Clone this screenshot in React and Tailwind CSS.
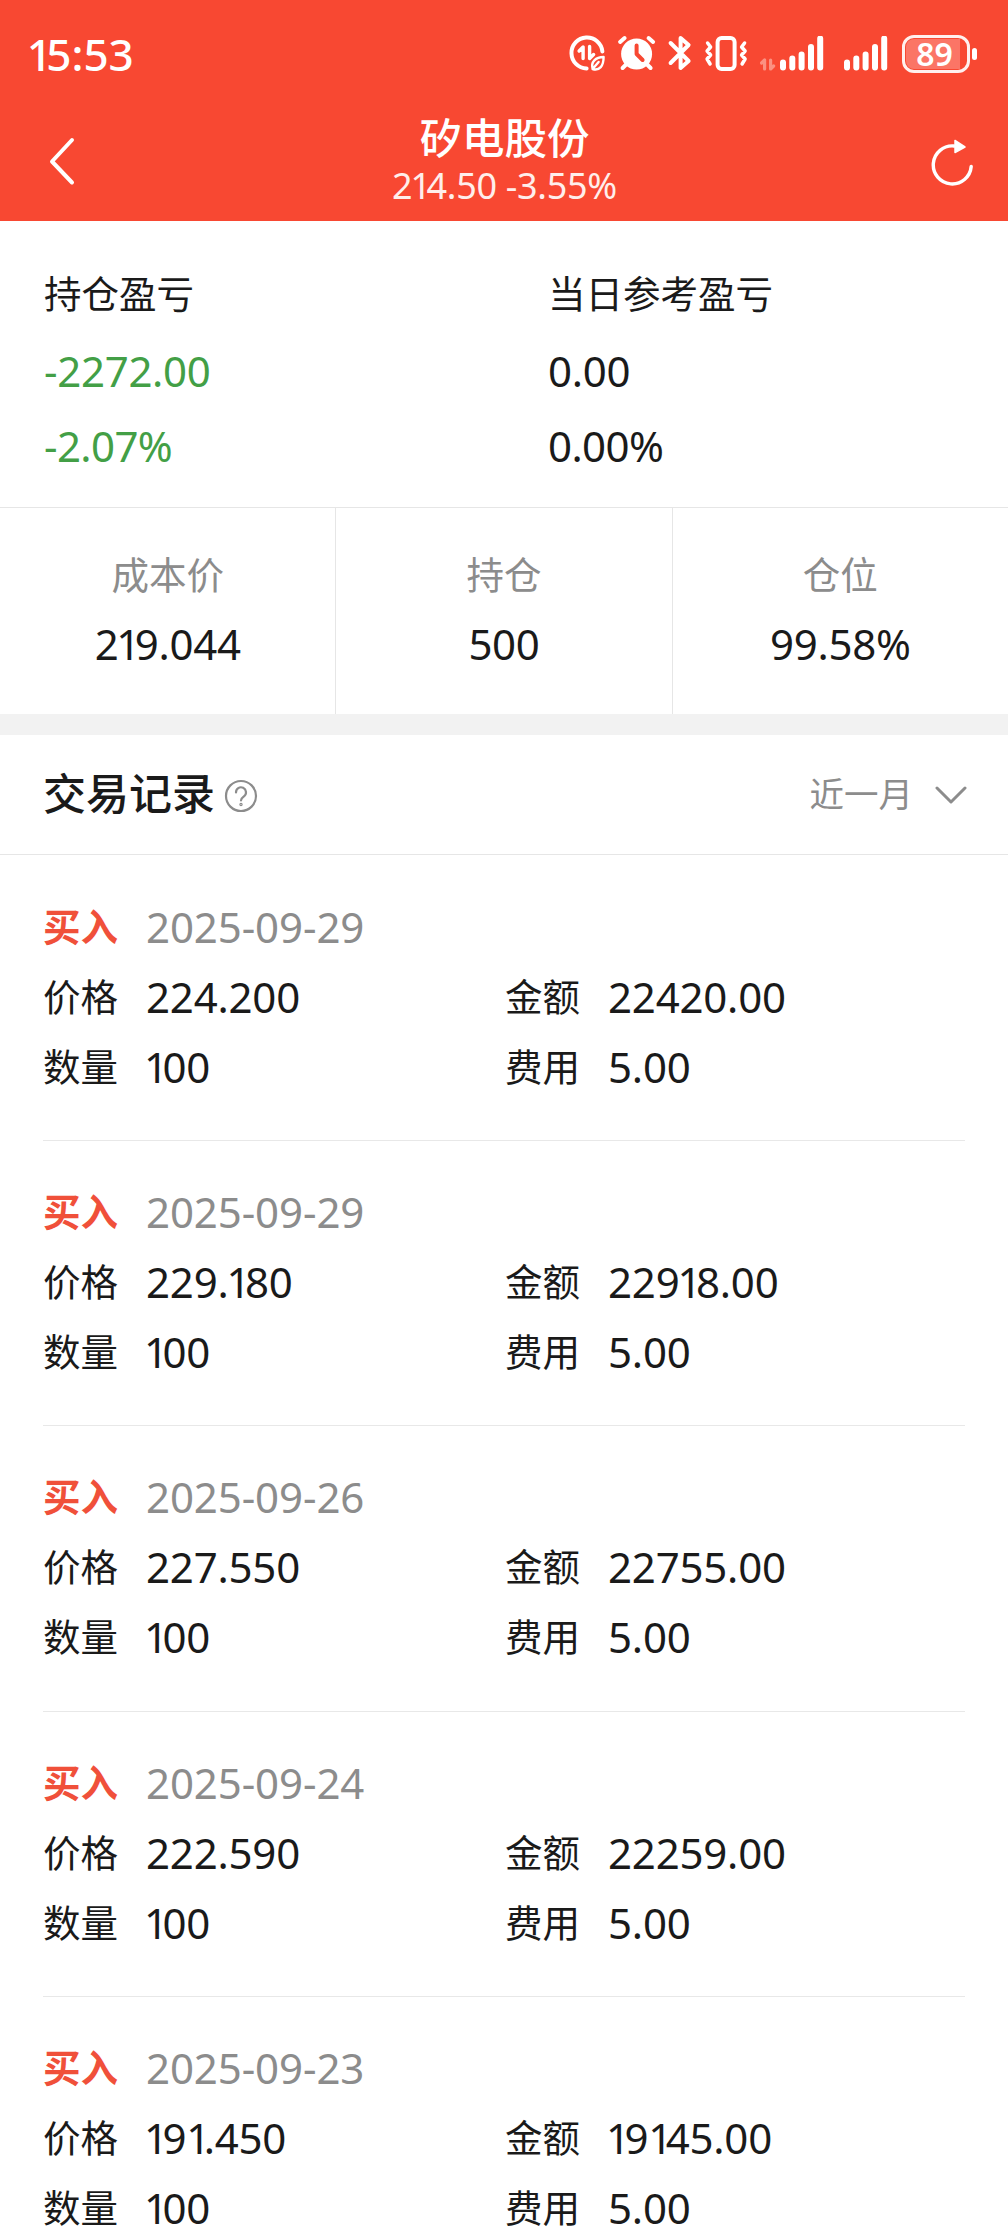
const records = [
	{ date: "2025-09-29", price: "224.200", amount: "22420.00", quantity: "100", fee: "5.00" },
	{ date: "2025-09-29", price: "229.180", amount: "22918.00", quantity: "100", fee: "5.00" },
	{ date: "2025-09-26", price: "227.550", amount: "22755.00", quantity: "100", fee: "5.00" },
	{ date: "2025-09-24", price: "222.590", amount: "22259.00", quantity: "100", fee: "5.00" },
	{ date: "2025-09-23", price: "191.450", amount: "19145.00", quantity: "100", fee: "5.00" },
];

// Figures with a narrow "1", the rest keep the font's advance
const Figures = ({ value }) =>
	value.split(/(1)/).filter(Boolean).map((part, i) =>
		part === "1" ? <span key={i} className="tracking-[-0.16em] first:-ml-[0.05em] first:tracking-[-0.13em]">1</span> : part
	);

const SignalBars = () => (
	<svg className="h-[36px] w-[46px]" viewBox="0 0 46 36" stroke="#fff" strokeWidth="6" strokeLinecap="round">
		<path d="M4 26.500v5M13.300 22.500v9M22.600 18.500v13M32 11v20.500M41.200 2.500v29" />
	</svg>
);

const StatusBar = () => (
	<div className="flex h-[106px] items-start justify-between pl-[29px] pr-[31px] pt-[28px] text-white">
		<span className="text-[44px] font-medium leading-[52px]"><Figures value="15:53" /></span>
		<div className="flex h-[52px] items-center">
			<svg className="h-[52px] w-[212px]" viewBox="-1.6 0 212 52" fill="none" stroke="#fff" strokeLinecap="round" strokeLinejoin="round">
				<path d="M33.8 23.5A15.5 15.5 0 1 0 18 40.5" strokeWidth="4" />
				<path d="M10.500 23l4-4v11.500M21 18.500v12l4-4" strokeWidth="3.4" />
				<path d="M24 41c-2-7 3-12 11-12 0 9-4 14-11 12zM24 41l6-7" strokeWidth="2.4" />
				<circle cx="68" cy="26" r="15.500" fill="#fff" stroke="none" />
				<path d="M51.500 14l4.500-4M84.500 14l-4.500-4M58 36l-4 4M78 36l4 4" strokeWidth="4" />
				<path d="M68 17.500v8.500l6 6" stroke="#f84832" strokeWidth="4" />
				<path d="M102 15l18 18-8 7V10l8 7-18 18" strokeWidth="4" />
				<rect x="149" y="10" width="17" height="31" rx="4" strokeWidth="4" />
				<path d="M139 15l3 4-3.500 4 3.500 4-3.500 4 3 5M176 15l-3 4 3.500 4-3.500 4 3.500 4-3 5" strokeWidth="3.500" />
				<path d="M193 35l3-3v9M202 32v9l3-3" stroke="#fb9182" strokeWidth="3.200" />
			</svg>
			<SignalBars />
			<div className="w-[18px]" />
			<SignalBars />
			<div className="ml-[13px] flex items-center gap-[2px]">
				<div className="flex h-[38px] w-[68px] rounded-[12px] border-[3px] border-[#fff0ee] p-[1px]">
					<div className="flex h-full w-[54px] items-center justify-center rounded-l-[8px] bg-[#fb7566] pl-[3px] text-[32px] font-semibold leading-none">89</div>
				</div>
				<div className="h-[12px] w-[5px] rounded-full bg-white" />
			</div>
		</div>
	</div>
);

const Header = () => (
	<header className="h-[221px] bg-[#f84832]">
		<StatusBar />
		<div className="flex h-[115px] items-start justify-between px-[46px] text-white">
			<svg className="mt-[30px] h-[50px] w-[32px]" viewBox="0 0 32 50" fill="none" stroke="#fff" strokeWidth="4" strokeLinecap="round" strokeLinejoin="round">
				<path d="M26 4L6 25.500l20 21" />
			</svg>
			<div className="flex flex-col items-center pt-[7px]">
				<h1 className="text-[42.500px] font-medium leading-[50px]">矽电股份</h1>
				<p className="text-[36px] leading-[46px] tracking-[-0.3px] text-[#ffeeeb]"><Figures value="214.50 -3.55%" /></p>
			</div>
			<svg className="-mr-[13px] mt-[32px] h-[48px] w-[44px]" viewBox="0 0 44 48" fill="none">
				<path d="M40.200 28.500A19 19 0 1 1 23 8" stroke="#fff" strokeWidth="3.400" strokeLinecap="round" />
				<path d="M24 2.500v12l10-5.500z" fill="#fff" stroke="#fff" strokeWidth="1.500" strokeLinejoin="round" />
			</svg>
		</div>
	</header>
);

const ProfitColumn = ({ label, amount, rate, tone }) => (
	<div className="w-1/2 pl-[44px] pt-[43px]">
		<p className="text-[37.500px] leading-[60px]">{label}</p>
		<p className={`mt-[17px] text-[42px] leading-[60px] tracking-[-0.3px] ${tone}`}>{amount}</p>
		<p className={`mt-[15px] text-[42px] leading-[60px] tracking-[-0.6px] ${tone}`}>{rate}</p>
	</div>
);

const Stat = ({ label, value }) => (
	<div className="flex flex-1 flex-col items-center border-r border-[#e6e6e6] pt-[37px] last:border-r-0">
		<span className="text-[37.500px] leading-[60px] text-[#8c8c8c]">{label}</span>
		<span className="mt-[9px] text-[42px] leading-[60px] tracking-[-0.3px]"><Figures value={value} /></span>
	</div>
);

const Field = ({ label, value }) => (
	<div className="flex h-[70px] items-center leading-[42px]">
		<span className="w-[103px] text-[37.500px]">{label}</span>
		<span className="text-[42px] tracking-[-0.2px]"><Figures value={value} /></span>
	</div>
);

const RecordItem = ({ record }) => (
	<li className="mx-[43px] h-[285.400px] border-b border-[#e8e8e8] pt-[36px]">
		<div className="flex h-[70px] items-center leading-[42px]">
			<span className="w-[103px] text-[37.500px] font-bold text-[#f0503a]">买入</span>
			<span className="text-[42px] tracking-[-0.1px] text-[#8c8c8c]">{record.date}</span>
		</div>
		<div className="grid grid-cols-[462px_460px]">
			<Field label="价格" value={record.price} />
			<Field label="金额" value={record.amount} />
			<Field label="数量" value={record.quantity} />
			<Field label="费用" value={record.fee} />
		</div>
	</li>
);

const App = () => (
	<div className="h-[2232px] w-[1008px] overflow-hidden bg-white font-['Noto_Sans','Noto_Sans_CJK_SC',sans-serif] text-[#1a1a1a]">
		<Header />
		<section className="flex h-[287px] border-b border-[#e6e6e6]">
			<ProfitColumn label="持仓盈亏" amount="-2272.00" rate="-2.07%" tone="text-[#439f46]" />
			<ProfitColumn label="当日参考盈亏" amount="0.00" rate="0.00%" tone="text-[#1a1a1a]" />
		</section>
		<section className="flex h-[206px]">
			<Stat label="成本价" value="219.044" />
			<Stat label="持仓" value="500" />
			<Stat label="仓位" value="99.58%" />
		</section>
		<div className="h-[21px] bg-[#f2f2f2]" />
		<div className="flex h-[120px] items-center justify-between border-b border-[#e6e6e6] pl-[43px] pr-[41px]">
			<div className="flex items-center gap-[9px]">
				<h2 className="-mt-[2px] text-[43px] font-medium leading-[60px]">交易记录</h2>
				<svg className="mt-[3px] h-[34px] w-[34px]" viewBox="0 0 34 34" fill="none" stroke="#8c8c8c" strokeWidth="2.200" strokeLinecap="round">
					<circle cx="17" cy="17" r="15" />
					<path d="M12 13.500a5 5 0 1 1 8 3.800c-2 1.500-3 2.200-3 4.200" />
					<circle cx="17" cy="25.500" r="0.600" />
				</svg>
			</div>
			<div className="flex items-center gap-[22px] text-[#8c8c8c]">
				<span className="-mt-[2px] text-[34.500px] leading-[60px]">近一月</span>
				<svg className="mt-[1px] h-[20px] w-[32px]" viewBox="0 0 32 20" fill="none" stroke="currentColor" strokeWidth="3" strokeLinecap="round" strokeLinejoin="round">
					<path d="M2 3l14 14L30 3" />
				</svg>
			</div>
		</div>
		<ul className="pt-[0.6px]">
			{records.map((record, i) => <RecordItem key={i} record={record} />)}
		</ul>
	</div>
);

export default App;
